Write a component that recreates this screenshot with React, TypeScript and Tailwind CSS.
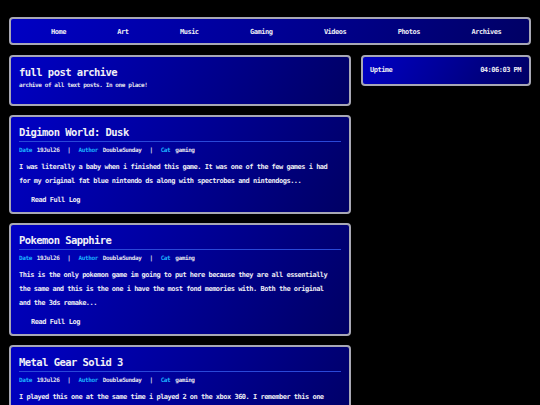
import React from 'react';

const navItems = ['Home', 'Art', 'Music', 'Gaming', 'Videos', 'Photos', 'Archives'];

const posts = [
  {
    title: 'Digimon World: Dusk',
    body: [
      'I was literally a baby when i finished this game. It was one of the few games i had',
      'for my original fat blue nintendo ds along with spectrobes and nintendogs...',
    ],
  },
  {
    title: 'Pokemon Sapphire',
    body: [
      'This is the only pokemon game im going to put here because they are all essentially',
      'the same and this is the one i have the most fond memories with. Both the original',
      'and the 3ds remake...',
    ],
  },
  {
    title: 'Metal Gear Solid 3',
    body: [
      'I played this one at the same time i played 2 on the xbox 360. I remember this one',
      'was the first one i ever finished and it still holds up really well today...',
    ],
  },
];

const panel =
  'border-2 border-[#a8a8b4] rounded-[4px] bg-[linear-gradient(120deg,#0000c4_0%,#00009a_45%,#000064_100%)]';

function Meta() {
  return (
    <div className="mt-[4px] flex items-center h-[8px] leading-[8px] text-[6px] tracking-[-0.4px] text-[#e4e4ee]">
      <span className="text-[#1cb4ff]">Date</span>
      <span className="ml-[5px]">19Jul26</span>
      <span className="mx-[8px]">|</span>
      <span className="text-[#1cb4ff]">Author</span>
      <span className="ml-[5px]">DoubleSunday</span>
      <span className="mx-[8px]">|</span>
      <span className="text-[#1cb4ff]">Cat</span>
      <span className="ml-[5px]">gaming</span>
    </div>
  );
}

function PostCard({ title, body }: { title: string; body: string[] }) {
  return (
    <div className={`${panel} px-[8px] pt-[9px] pb-[7px]`}>
      <h2 className="text-[10.5px] leading-[12px] tracking-[-0.55px] text-[#f0f0f6]">{title}</h2>
      <div className="mt-[3px] h-px bg-[#2a48d8]" />
      <Meta />
      <div className="mt-[6px] text-[7px] leading-[14px] tracking-[-0.5px] text-[#ececf4]">
        {body.map((line) => (
          <div key={line}>{line}</div>
        ))}
      </div>
      <div className="mt-[7px] pl-[12px] text-[7px] leading-[10px] tracking-[-0.45px] text-[#ececf4]">
        Read Full Log
      </div>
    </div>
  );
}

export default function App() {
  return (
    <div
      className="w-[540px] h-[405px] overflow-hidden bg-black px-[9px] pt-[17px] font-bold"
      style={{ fontFamily: '"DejaVu Sans Mono", "Liberation Mono", monospace' }}
    >
      {/* Nav */}
      <nav className={`${panel} h-[28px] flex items-center pt-[2px] pl-[40px] gap-[51.5px] text-[7px] tracking-[-0.5px] text-[#ececf4]`}>
        {navItems.map((item) => (
          <span key={item}>{item}</span>
        ))}
      </nav>

      <div className="mt-[10px] flex gap-[10px] items-start">
        {/* Main column */}
        <div className="w-[342px] flex flex-col gap-[9px]">
          <div className={`${panel} px-[8px] pt-[9px] pb-[15px]`}>
            <h1 className="text-[10.5px] leading-[12px] tracking-[-0.55px] text-[#f0f0f6]">full post archive</h1>
            <p className="mt-[3px] text-[6px] leading-[8px] tracking-[-0.4px] text-[#e4e4ee]">
              archive of all text posts. In one place!
            </p>
          </div>
          {posts.map((p) => (
            <PostCard key={p.title} title={p.title} body={p.body} />
          ))}
        </div>

        {/* Sidebar */}
        <div className="w-[170px]">
          <div className={`${panel} h-[31px] flex items-center justify-between pl-[7px] pr-[8px] text-[7px] tracking-[-0.5px] text-[#ececf4]`}>
            <span>Uptime</span>
            <span>04:06:03 PM</span>
          </div>
        </div>
      </div>
    </div>
  );
}
